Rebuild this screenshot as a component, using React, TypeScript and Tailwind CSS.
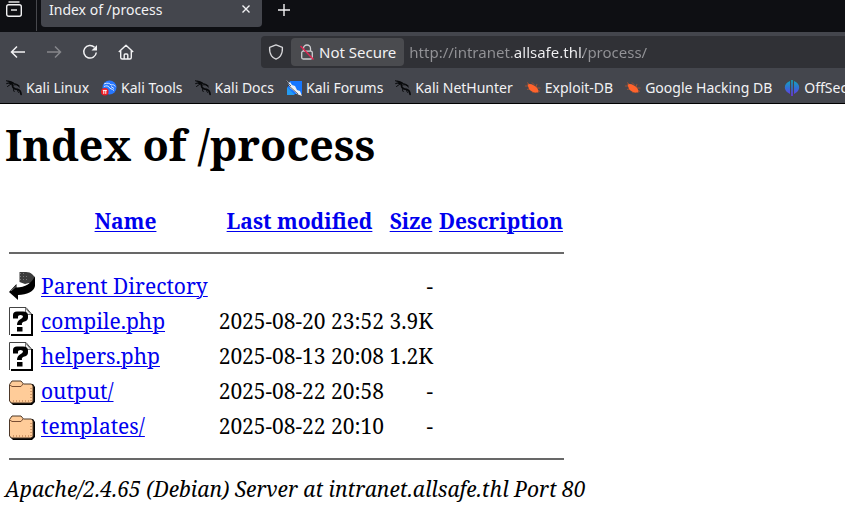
import { useState } from "react";
import type { ReactNode } from "react";

function DragonIcon() {
  return (
    <svg viewBox="0 0 16 16" className="size-4 shrink-0" fill="none" stroke="#08090b" strokeLinecap="round">
      <path d="M.5.8C3 1.4 5 1.600 7.500 3M.8 3.600C3 2.600 5.500 2.600 8 3.500c2 .5 3.500 1 5 2.500" strokeWidth="1.100" />
      <path d="M3.500 3C5 3 6.500 3.600 6.500 5.400 6.500 8.500 9 9 11.500 9.400c2.300.5 3.200 1.500 3.600 5" strokeWidth="1.700" />
      <path d="M7.500 5c2-.8 4-.4 6 2M8 8.600c-.8.900-.7 2 .2 3M11.500 9.600c-.3 1.500.5 2 1.500 3.200M5 4l-3.500 2.500" strokeWidth="1" />
    </svg>
  );
}

function ToolsIcon() {
  return (
    <svg viewBox="0 0 16 16" className="size-4 shrink-0" fill="none">
      <circle cx="8.500" cy="7.500" r="7" fill="#2777ff" />
      <path d="M3 4c3-1.500 6-.8 7 1 2-.7 3.500 0 4.300 1.500M3 6.500c2.500-1 4-.8 5 .5.500 2 3 1.500 5 3.500M10 6.500l3 2" stroke="#d9e8ff" strokeWidth="1" />
      <circle cx="3.800" cy="11.800" r="3.800" fill="#ed1c24" />
      <path d="M1.800 10.400h4M2.800 10.400v3.500M4.800 10.400v3.500" stroke="#fff" strokeWidth="1" />
    </svg>
  );
}

function ForumsIcon() {
  return (
    <svg viewBox="0 0 16 16" className="size-4 shrink-0">
      <path d="M4 1h12v13H6L1 9Z" fill="#1677ff" />
      <path d="M1 7l8 8H1Z" fill="#249cf2" />
      <path d="M0 0l3 3 1-1 2 3 3 1 2 4 3 1 2 5-5-2-3-3-4-3-1-3Z" fill="#eef1f5" />
      <path d="M0 1l5 5M2 5l10 9" stroke="#222632" strokeWidth=".7" />
    </svg>
  );
}

function BugIcon() {
  return (
    <svg viewBox="0 0 16 16" className="size-4 shrink-0" fill="none">
      <path d="M2 2.500l4 3M0 6h5M2 9.500l4-1M7 2.500l3 3M7 12l4 .5M12 4l-1 3M15.500 8h-4M15 11.500l-4-2" stroke="#ae542f" strokeWidth=".8" />
      <path d="M2.500 4.500c2-1 4-.5 6 .8 3 1.200 5 3.700 5 7.200-3.500 0-7.500-.5-9.500-3.500Z" fill="#ff632c" />
    </svg>
  );
}

function OffSecIcon() {
  return (
    <svg viewBox="0 0 16 16" className="size-4 shrink-0">
      <defs>
        <linearGradient id="offsec" x2="0" y2="1">
          <stop stopColor="#10a8bd" />
          <stop offset=".5" stopColor="#326fd3" />
          <stop offset="1" stopColor="#7132eb" />
        </linearGradient>
      </defs>
      <path d="M6 1v13L3 12C-.5 9 0 3 6 1ZM10 1v13l3-2c3.500-3 3-9-3-11ZM7.200 0h1.600v16H7.200Z" fill="url(#offsec)" />
    </svg>
  );
}

function BackArrowIcon() {
  return (
    <svg viewBox="0 0 26 28" className="h-7 w-[26px]" role="img" aria-label="[PARENTDIR]">
      <path d="M10.500 0H17c5 0 8.500 3.500 9 7l-3 5-3-1-4 1-5.500-2Z" fill="#3c3c3c" />
      <path d="M11 1.500h5M11 4.500h8M11 7.500h9" stroke="#777" strokeDasharray="1 2" />
      <path d="M26 4v10c-1 6-8 8.500-17 9V28L0 20 7.500 12v3.500C16 15.500 23 11 26 4Z" fill="#000" />
      <path d="M2 19l5-4.500" stroke="#777" />
    </svg>
  );
}

function UnknownIcon() {
  return (
    <svg viewBox="0 0 24 29" className="h-[29px] w-6" role="img" aria-label="[   ]">
      <path d="M1 1h16l6 7v20H1Z" fill="#fff" />
      <path d="M.5 28V.5H17l5.500 6.500" fill="none" stroke="#444" />
      <path d="M16.500 1v6.500H22Z" fill="#eee" stroke="#777" />
      <path d="M23 7v21H2" fill="none" stroke="#000" strokeWidth="2" />
      <path d="M4 11.500V8q0-3.500 4-3.500h6q5 0 5 4v2q0 3-3.500 4T13 18H8q0-4 3-5.500t3-3T11.500 8 9 9.500v2Z" fill="#000" />
      <path d="M8 20h5.500v4.500H8Z" fill="#000" />
    </svg>
  );
}

function FolderIcon() {
  return (
    <svg viewBox="0 0 26 25" className="mt-0.5 h-[25px] w-[26px]" role="img" aria-label="[DIR]">
      <path d="M3 4h21l2 3v15l-3 3H4l-3-3Z" fill="#000" />
      <path d="M.5 4.500L3 1h9l2.500 3h8l1.500 2v15.500l-2 1.500H2.500l-2-2Z" fill="#ffcc99" stroke="#4d3829" />
      <path d="M1 5l2 1.500h9L14 4" fill="none" stroke="#7a4e33" />
      <path d="M4 21h18M22 8v13" fill="none" stroke="#a8683a" strokeDasharray="1 2" />
    </svg>
  );
}

const bookmarks: { name: string; icon: ReactNode }[] = [
  { name: "Kali Linux", icon: <DragonIcon /> },
  { name: "Kali Tools", icon: <ToolsIcon /> },
  { name: "Kali Docs", icon: <DragonIcon /> },
  { name: "Kali Forums", icon: <ForumsIcon /> },
  { name: "Kali NetHunter", icon: <DragonIcon /> },
  { name: "Exploit-DB", icon: <BugIcon /> },
  { name: "Google Hacking DB", icon: <BugIcon /> },
  { name: "OffSec", icon: <OffSecIcon /> },
];

const entries: { name: string; date: string; size: string; icon: ReactNode }[] = [
  { name: "Parent Directory", date: "", size: "-", icon: <BackArrowIcon /> },
  { name: "compile.php", date: "2025-08-20 23:52", size: "3.9K", icon: <UnknownIcon /> },
  { name: "helpers.php", date: "2025-08-13 20:08", size: "1.2K", icon: <UnknownIcon /> },
  { name: "output/", date: "2025-08-22 20:58", size: "-", icon: <FolderIcon /> },
  { name: "templates/", date: "2025-08-22 20:10", size: "-", icon: <FolderIcon /> },
];

function Browser() {
  const [url, setUrl] = useState("http://intranet.allsafe.thl/process/");
  return (
    <header className="overflow-hidden border-b border-black bg-[#44464d] font-['Noto_Sans',sans-serif] text-[#f2f2f4]">
      <div className="flex h-8 items-start bg-[#0e0f13]">
        <button aria-label="Recent browsing" className="flex h-[31px] w-[37px] items-start border-r border-[#47484d] pl-[6px]">
          <svg viewBox="0 0 16 18" className="h-[18px] w-4" fill="none" stroke="currentColor" strokeWidth="1.400">
            <path d="M2.500 2h11" />
            <rect x=".7" y="4.700" width="14.600" height="11.600" rx="2" />
            <path d="M5 10h6" />
          </svg>
        </button>
        <div className="ml-1 flex h-[27px] w-[221px] items-start justify-between rounded-b bg-[#44464d] pr-[10px] pl-2">
          <span className="text-[14px] leading-5">Index of /process</span>
          <button aria-label="Close tab" className="flex h-[18px] items-center">
            <svg viewBox="0 0 12 12" className="size-3" stroke="currentColor" strokeWidth="1.400">
              <path d="M2.500 2.500l7 7M9.500 2.500l-7 7" />
            </svg>
          </button>
        </div>
        <button aria-label="New tab" className="ml-[15px] flex h-5 items-center">
          <svg viewBox="0 0 14 14" className="size-[14px]" stroke="currentColor" strokeWidth="1.400">
            <path d="M7 1v12M1 7h12" />
          </svg>
        </button>
      </div>

      <div className="flex h-10 items-center">
        <nav className="flex w-[261px] shrink-0 items-center gap-5 pl-[10px]">
          <button aria-label="Back">
            <svg viewBox="0 0 16 16" className="size-4" fill="none" stroke="currentColor" strokeWidth="1.500">
              <path d="M15 8H2M7 2.500L1.500 8 7 13.500" />
            </svg>
          </button>
          <button aria-label="Forward" disabled className="text-[#86878b]">
            <svg viewBox="0 0 16 16" className="size-4" fill="none" stroke="currentColor" strokeWidth="1.500">
              <path d="M1 8h13M9 2.500L14.500 8 9 13.500" />
            </svg>
          </button>
          <button aria-label="Reload">
            <svg viewBox="0 0 16 16" className="size-4" fill="none" stroke="currentColor" strokeWidth="1.500">
              <path d="M12.500 3.300A6.300 6.300 0 1 0 14.300 8.500" />
              <path d="M15 1v5.500H9.500Z" fill="currentColor" stroke="none" />
            </svg>
          </button>
          <button aria-label="Home">
            <svg viewBox="0 0 16 16" className="size-4" fill="none" stroke="currentColor" strokeWidth="1.400" strokeLinejoin="round">
              <path d="M.8 8L8 1.200 15.200 8M2.700 6.500v7q0 1.500 1.500 1.500h7.600q1.500 0 1.500-1.500v-7M6.200 15v-4q0-1 1-1h1.600q1 0 1 1v4" />
            </svg>
          </button>
        </nav>
        <div className="flex h-8 min-w-0 flex-1 items-center rounded-l bg-[#303136]">
          <button aria-label="Tracking protection" className="flex w-[30px] justify-center">
            <svg viewBox="0 0 16 16" className="size-4" fill="none" stroke="#d7d7da" strokeWidth="1.300" strokeLinejoin="round">
              <path d="M8 .9l6.400 2.500q.3 5.500-1.900 8.400Q11 14 8 15.200 5 14 3.500 11.800 1.300 8.900 1.600 3.400Z" />
            </svg>
          </button>
          <button className="flex h-7 shrink-0 items-center gap-1 rounded bg-[#4a4b4f] px-2 text-[15px] leading-5">
            <svg viewBox="0 0 16 16" className="size-4" fill="none">
              <rect x="2.700" y="7.200" width="10.600" height="7.800" rx="1.500" stroke="#cecfd2" strokeWidth="1.300" />
              <path d="M4.500 7V4.500a3.500 3.500 0 0 1 7 0V7" stroke="#cecfd2" strokeWidth="1.300" />
              <path d="M1.500 2l13 13.500" stroke="#e32652" strokeWidth="1.400" />
            </svg>
            Not Secure
          </button>
          <input
            aria-label="Address"
            value={url}
            onChange={(e) => setUrl(e.target.value)}
            spellCheck={false}
            className="ml-[5px] h-7 min-w-0 flex-1 bg-[linear-gradient(to_right,#939397_105px,#f2f2f4_105px,#f2f2f4_174px,#939397_174px)] bg-clip-text text-[15px] leading-5 text-transparent outline-none"
          />
        </div>
      </div>

      <nav className="flex h-[31px] items-center gap-3 pl-[6px]">
        {bookmarks.map((b) => (
          <a key={b.name} href="#" className="flex shrink-0 items-center gap-1 text-[14px] leading-5">
            {b.icon}
            {b.name}
          </a>
        ))}
      </nav>
    </header>
  );
}

const link = "text-[#0000ee] underline decoration-1 underline-offset-2";

export default function App() {
  return (
    <div className="min-h-screen overflow-hidden bg-white">
      <Browser />
      <main className="px-[5px] pt-[11px] font-['Noto_Serif','DejaVu_Serif',serif] text-[21px] leading-[30px] text-black">
        <h1 className="text-[43px] leading-[60px] font-bold">Index of /process</h1>
        <table className="mt-[27px] border-separate border-spacing-[3px] whitespace-nowrap">
          <thead>
            <tr>
              <th className="w-[29px] p-px" aria-label="Type"></th>
              <th className="w-[171px] p-px"><a href="#" className={link}>Name</a></th>
              <th className="w-[171px] p-px"><a href="#" className={link}>Last modified</a></th>
              <th className="w-[46px] p-px"><a href="#" className={link}>Size</a></th>
              <th className="w-[128px] p-px"><a href="#" className={link}>Description</a></th>
            </tr>
          </thead>
          <tbody>
            <tr>
              <td colSpan={5} className="p-px"><hr className="mt-[11px] mb-3 border-t-2 border-[#686868]" /></td>
            </tr>
            {entries.map((e) => (
              <tr key={e.name}>
                <td className="p-px">{e.icon}</td>
                <td className="p-px"><a href="#" className={link}>{e.name}</a></td>
                <td className="p-px text-right">{e.date}</td>
                <td className="p-px text-right">{e.size}</td>
                <td className="p-px"></td>
              </tr>
            ))}
            <tr>
              <td colSpan={5} className="p-px"><hr className="mt-3 mb-[10px] border-t-2 border-[#686868]" /></td>
            </tr>
          </tbody>
        </table>
        <address className="italic">Apache/2.4.65 (Debian) Server at intranet.allsafe.thl Port 80</address>
      </main>
    </div>
  );
}
